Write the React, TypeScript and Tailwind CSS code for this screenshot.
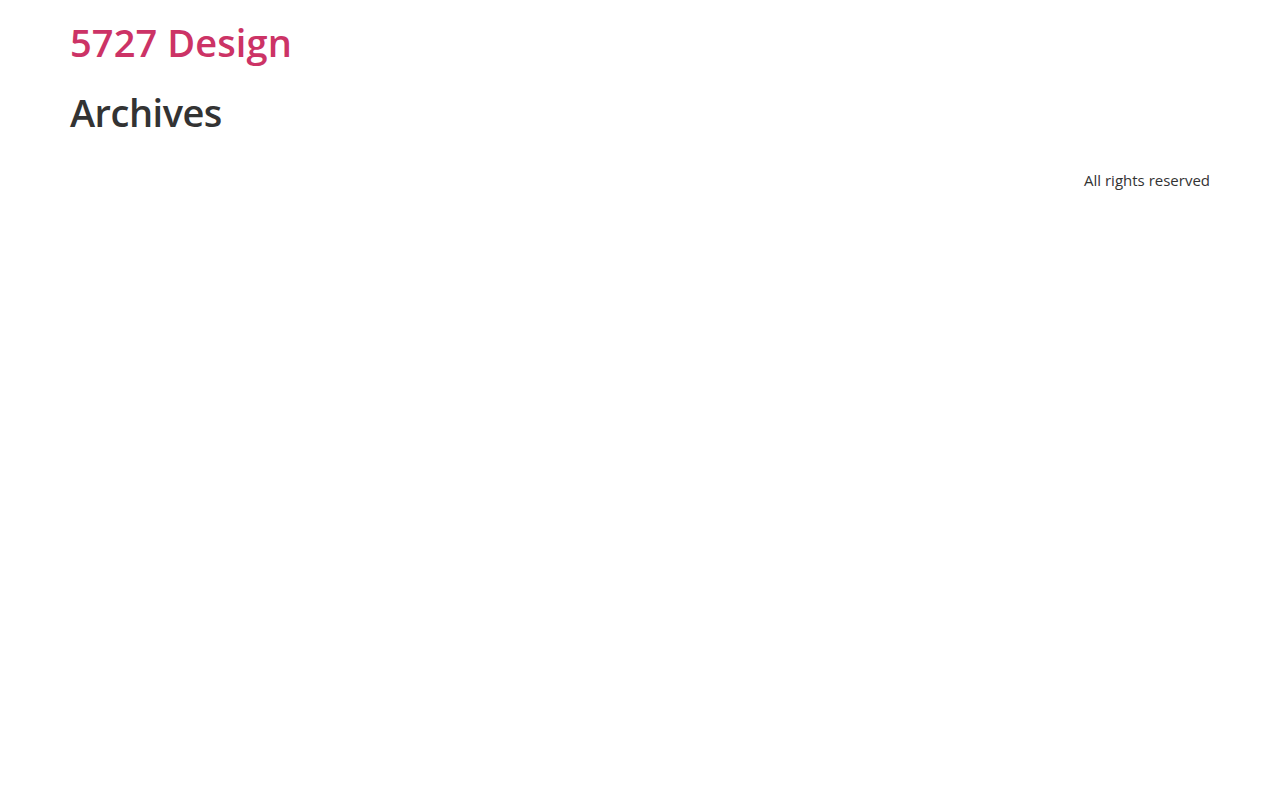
import React from "react";

export default function App() {
  return (
    <div className="min-h-screen bg-white px-[70px] text-[#333]" style={{ fontFamily: '"Open Sans", "Noto Sans", sans-serif' }}>
      <header className="pt-[16px]">
        <a href="#" className="block text-[38px] font-semibold leading-[52px] text-[#cc3366] tracking-[0.1px]">
          5727 Design
        </a>
      </header>
      <main className="pt-[18px]">
        <h1 className="text-[38px] font-semibold leading-[52px] text-[#333] tracking-[-0.5px]">Archives</h1>
      </main>
      <footer className="pt-[30px] text-right text-[15px] leading-[24px] text-[#333]">
        All rights reserved
      </footer>
    </div>
  );
}
